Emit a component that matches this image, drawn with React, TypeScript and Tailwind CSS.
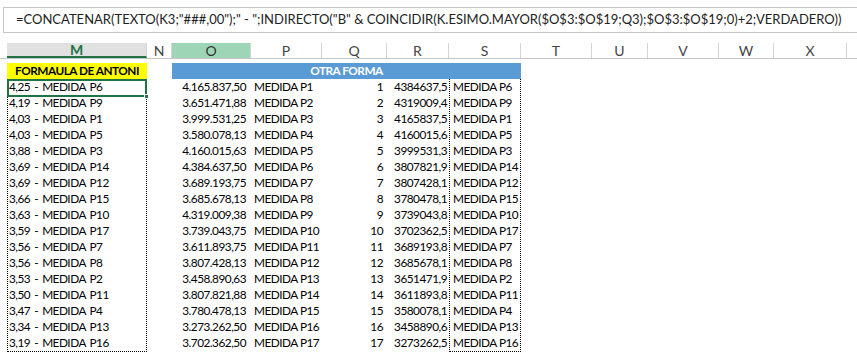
import React from 'react'

const font = { fontFamily: 'Lato, "Open Sans", sans-serif' }

const cols = [
  { l: 'M', w: 'w-[140px]' },
  { l: 'N', w: 'w-[25px]' },
  { l: 'O', w: 'w-[79px]' },
  { l: 'P', w: 'w-[71px]' },
  { l: 'Q', w: 'w-[65px]' },
  { l: 'R', w: 'w-[62px]' },
  { l: 'S', w: 'w-[72px]' },
  { l: 'T', w: 'w-[71px]' },
  { l: 'U', w: 'w-[56px]' },
  { l: 'V', w: 'w-[71px]' },
  { l: 'W', w: 'w-[55px]' },
  { l: 'X', w: 'w-[73px]' },
]

const left = [
  '4,25 - MEDIDA P6', '4,19 - MEDIDA P9', '4,03 - MEDIDA P1', '4,03 - MEDIDA P5',
  '3,88 - MEDIDA P3', '3,69 - MEDIDA P14', '3,69 - MEDIDA P12', '3,66 - MEDIDA P15',
  '3,63 - MEDIDA P10', '3,59 - MEDIDA P17', '3,56 - MEDIDA P7', '3,56 - MEDIDA P8',
  '3,53 - MEDIDA P2', '3,50 - MEDIDA P11', '3,47 - MEDIDA P4', '3,34 - MEDIDA P13',
  '3,19 - MEDIDA P16',
]

const values = [
  '4.165.837,50', '3.651.471,88', '3.999.531,25', '3.580.078,13', '4.160.015,63',
  '4.384.637,50', '3.689.193,75', '3.685.678,13', '4.319.009,38', '3.739.043,75',
  '3.611.893,75', '3.807.428,13', '3.458.890,63', '3.807.821,88', '3.780.478,13',
  '3.273.262,50', '3.702.362,50',
]

const ranked = [
  ['4384637,5', 'MEDIDA P6'], ['4319009,4', 'MEDIDA P9'], ['4165837,5', 'MEDIDA P1'],
  ['4160015,6', 'MEDIDA P5'], ['3999531,3', 'MEDIDA P3'], ['3807821,9', 'MEDIDA P14'],
  ['3807428,1', 'MEDIDA P12'], ['3780478,1', 'MEDIDA P15'], ['3739043,8', 'MEDIDA P10'],
  ['3702362,5', 'MEDIDA P17'], ['3689193,8', 'MEDIDA P7'], ['3685678,1', 'MEDIDA P8'],
  ['3651471,9', 'MEDIDA P2'], ['3611893,8', 'MEDIDA P11'], ['3580078,1', 'MEDIDA P4'],
  ['3458890,6', 'MEDIDA P13'], ['3273262,5', 'MEDIDA P16'],
]

export default function App() {
  return (
    <div className="w-[857px] h-[361px] bg-white overflow-hidden text-black" style={font}>
      {/* formula bar */}
      <div className="h-[7px]" />
      <div className="ml-[3px] h-[26px] border border-r-0 border-[#c6c6c6] flex items-center pl-[12px] text-[13px] whitespace-nowrap text-[#222]">
        =CONCATENAR(TEXTO(K3;"###,00");" - ";INDIRECTO("B" &amp; COINCIDIR(K.ESIMO.MAYOR($O$3:$O$19;Q3);$O$3:$O$19;0)+2;VERDADERO))
      </div>

      {/* column headers */}
      <div className="mt-[10px] flex h-[16px] pl-[7px] border-b border-[#c6c6c6] text-[14px] text-[#444]">
        {cols.map((c) => (
          <div
            key={c.l}
            className={
              c.w +
              ' shrink-0 flex items-center justify-center border-r border-[#d4d4d4] ' +
              (c.l === 'M'
                ? 'bg-[#e1e1e1] text-[#217346] font-bold border-b-2 border-b-[#217346]'
                : c.l === 'O'
                ? 'bg-[#9fd5b7] text-[#333]'
                : '')
            }
          >
            {c.l}
          </div>
        ))}
      </div>

      {/* sheet body */}
      <div className="mt-[4px] flex pl-[7px] text-[11.8px] tracking-[-0.5px] leading-[16px]">
        {/* column M */}
        <div className="w-[140px] shrink-0">
          <div className="h-[16px] bg-[#ffff00] font-bold text-center">FORMAULA DE ANTONI</div>
          <div className="border-l border-r border-b border-dotted border-black">
            {left.map((t, i) => (
              <div key={i} className="relative h-[16px] whitespace-nowrap">
                {i === 0 && (
                  <div className="absolute -left-[1px] -right-[1px] top-0 h-[18px] border-2 border-[#217346]">
                    <div className="absolute -right-[4px] -bottom-[4px] w-[5px] h-[5px] bg-[#217346] border border-white" />
                  </div>
                )}
                <span className="relative pl-[1px] [word-spacing:1.5px]">{t}</span>
              </div>
            ))}
          </div>
        </div>

        <div className="w-[25px] shrink-0" />

        {/* O to S */}
        <div className="w-[349px] shrink-0">
          <div className="h-[16px] bg-[#5b9bd5] text-white font-bold text-center">OTRA FORMA</div>
          <div className="flex">
            <div className="w-[277px] shrink-0">
              {values.map((v, i) => (
                <div key={i} className="flex h-[16px] whitespace-nowrap">
                  <div className="w-[79px] pr-[5px] text-right">{v}</div>
                  <div className="w-[71px] pl-[3px]">MEDIDA P{i + 1}</div>
                  <div className="w-[65px] pr-[4px] text-right">{i + 1}</div>
                  <div className="w-[62px] pr-[2px] text-right">{ranked[i][0]}</div>
                </div>
              ))}
            </div>
            <div className="w-[72px] shrink-0 border border-t-0 border-dotted border-black">
              {ranked.map((r, i) => (
                <div key={i} className="h-[16px] whitespace-nowrap pl-[3px]">{r[1]}</div>
              ))}
            </div>
          </div>
        </div>
      </div>
    </div>
  )
}
